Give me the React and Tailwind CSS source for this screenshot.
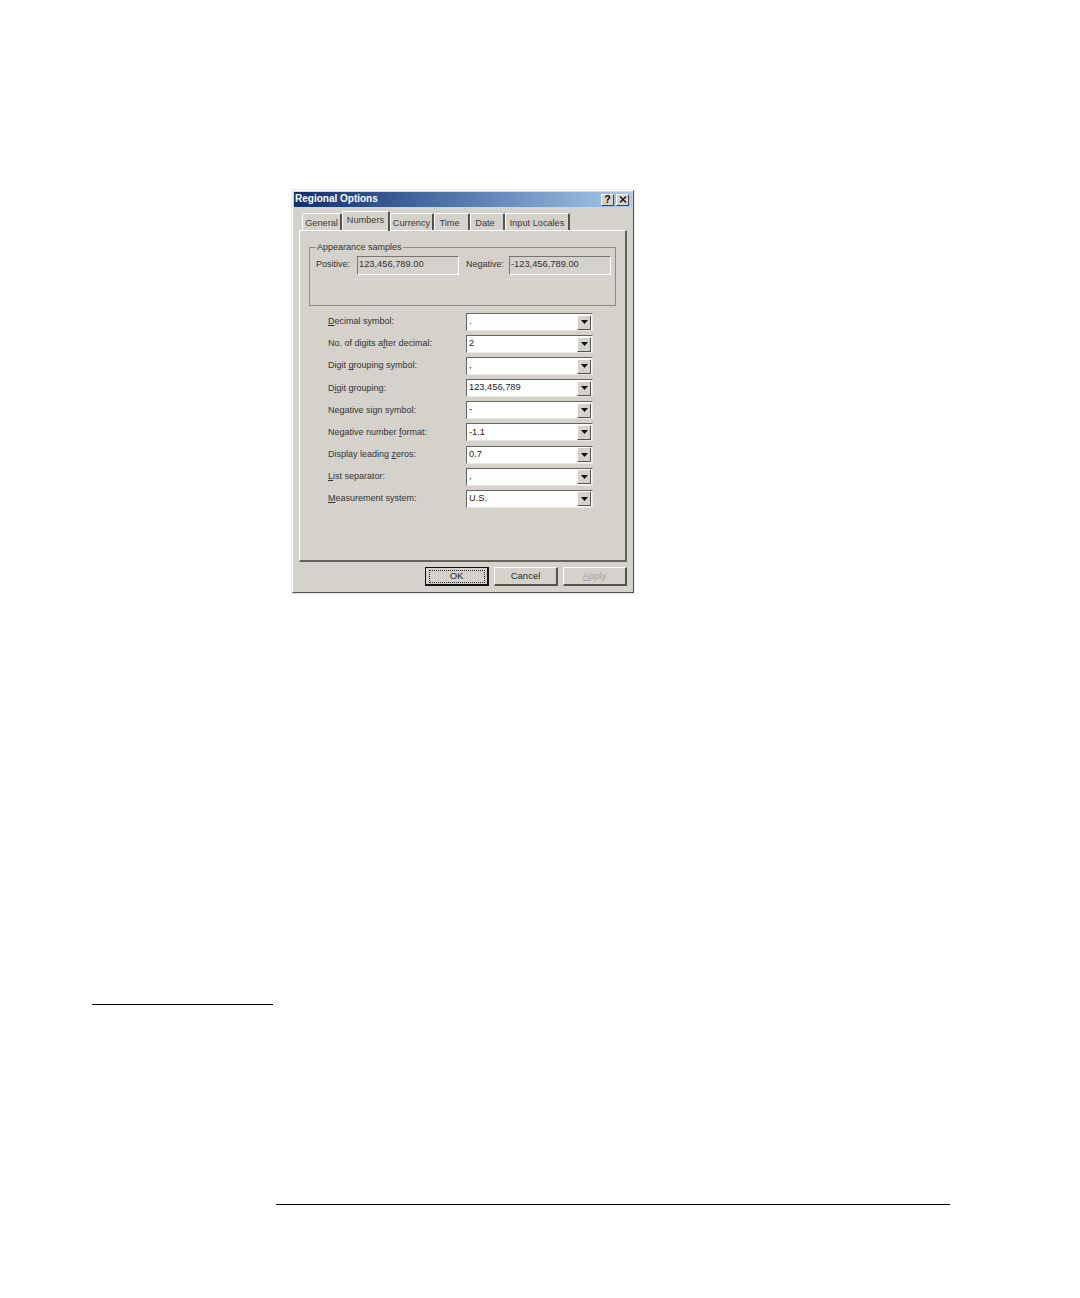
// Regional Options dialog on a scanned manual page
const FONT = { fontFamily: '"Liberation Sans", Arial, sans-serif' };

const ROWS = [
  { label: <><u>D</u>ecimal symbol:</>, value: '.' },
  { label: <>No. of digits a<u>f</u>ter decimal:</>, value: '2' },
  { label: <>Digit <u>g</u>rouping symbol:</>, value: ',' },
  { label: <>D<u>i</u>git grouping:</>, value: '123,456,789' },
  { label: <>Ne<u>g</u>ative sign symbol:</>, value: '-' },
  { label: <>Negative number <u>f</u>ormat:</>, value: '-1.1' },
  { label: <>Display leading <u>z</u>eros:</>, value: '0.7' },
  { label: <><u>L</u>ist separator:</>, value: ',' },
  { label: <><u>M</u>easurement system:</>, value: 'U.S.' },
];

const TABS = [
  { name: 'General', w: 'w-[40px]' },
  { name: 'Numbers', w: 'w-[48px]', active: true },
  { name: 'Currency', w: 'w-[44px]' },
  { name: 'Time', w: 'w-[36px] pr-[4px]' },
  { name: 'Date', w: 'w-[35px] pr-[4px]' },
  { name: 'Input Locales', w: 'w-[65px]' },
];

function Tab({ name, w, active }) {
  return (
    <div
      className={`${w} flex items-center justify-center border-l border-t border-white border-r-2 border-r-[#55534e] text-[9.2px] text-[#3a3a3a] whitespace-nowrap rounded-t-[2px] ${
        active ? 'h-[20px] relative z-10 -mb-px pb-[1px]' : 'h-[17px] pt-[3px]'
      }`}
    >
      {name}
    </div>
  );
}

function Sample({ value, w }) {
  return (
    <div className={`${w} h-[19px] border border-t-[#77756f] border-l-[#77756f] border-r-white border-b-white flex items-center pl-[1px] pb-[1px] text-[9.3px] text-[#333]`}>
      {value}
    </div>
  );
}

function Combo({ value }) {
  return (
    <div className="w-[127px] h-[18px] bg-white border border-t-[#66645f] border-l-[#66645f] border-r-[#e8e6e0] border-b-[#e8e6e0] flex items-center justify-between">
      <span className="pl-[2px] text-[9.3px] text-[#222]">{value}</span>
      <div className="w-[14px] h-[15px] mr-px bg-[#d5d2cb] border border-t-white border-l-white border-r-[#55534e] border-b-[#55534e] flex items-center justify-center">
        <svg width="7" height="4" viewBox="0 0 7 4"><path d="M0 0h7L3.5 4z" fill="#111" /></svg>
      </div>
    </div>
  );
}

function Btn({ children, w, ok, disabled }) {
  return (
    <div
      className={`${w} h-[19px] flex items-center justify-center border text-[9.5px] ${
        ok
          ? 'border-[#111] border-b-2 border-r-2'
          : 'border-t-white border-l-white border-r-[#55534e] border-b-[#55534e] border-r-2 border-b-2'
      } ${disabled ? 'text-[#a5a39d]' : 'text-[#2a2a2a]'}`}
    >
      {ok ? (
        <div className="w-[56px] h-[13px] border border-dotted border-[#222] flex items-center justify-center">{children}</div>
      ) : (
        children
      )}
    </div>
  );
}

export default function App() {
  return (
    <div className="w-[1080px] h-[1298px] bg-white overflow-hidden flex flex-col" style={FONT}>
      <div className="ml-[291px] mt-[189px] w-[344px] h-[405px] border border-[#e6e6e6] shrink-0">
        <div className="h-full bg-[#d5d2cb] border-t border-l border-white border-r border-r-[#55534e] border-b border-b-[#55534e] p-px flex flex-col">
          {/* Title bar */}
          <div className="h-[15px] bg-gradient-to-r from-[#0f2f70] to-[#a8caec] flex items-center justify-between pl-[1px] pr-[3px]">
            <span className="text-[10px] font-bold text-white leading-none pb-[2px]">Regional Options</span>
            <div className="flex gap-[2px]">
              <div className="w-[13px] h-[12px] bg-[#d5d2cb] border border-t-white border-l-white border-r-[#444] border-b-[#444] flex items-center justify-center text-[10px] font-bold text-black leading-none">?</div>
              <div className="w-[13px] h-[12px] bg-[#d5d2cb] border border-t-white border-l-white border-r-[#444] border-b-[#444] flex items-center justify-center">
                <svg width="8" height="7" viewBox="0 0 8 7"><path d="M1 0.5l6 6M7 0.5l-6 6" stroke="#111" strokeWidth="1.4" /></svg>
              </div>
            </div>
          </div>

          {/* Tabs */}
          <div className="h-[21px] mt-[2px] flex items-end pl-[8px]">
            {TABS.map((t) => <Tab key={t.name} {...t} />)}
          </div>

          {/* Panel */}
          <div className="mx-[5px] h-[332px] border-t border-l border-white border-r-2 border-b-2 border-r-[#66645f] border-b-[#66645f] pt-[16px] px-[9px]">
            <div className="relative h-[59px] border border-[#8c8a84] flex items-start pt-[8px] pl-[6px]">
              <span className="absolute -top-[7px] left-[6px] bg-[#d5d2cb] px-px text-[9px] leading-[12px] text-[#333]">Appearance samples</span>
              <span className="text-[9px] text-[#333] mt-[2px] w-[41px]">Positive:</span>
              <Sample value="123,456,789.00" w="w-[102px]" />
              <span className="text-[9px] text-[#333] mt-[2px] ml-[7px] w-[43px]">Negative:</span>
              <Sample value="-123,456,789.00" w="w-[102px]" />
            </div>
            <div className="mt-[7px] ml-[19px] flex flex-col gap-[4.1px]">
              {ROWS.map((r, i) => (
                <div key={i} className="h-[18px] flex items-center">
                  <span className="w-[138px] text-[9px] text-[#333]">{r.label}</span>
                  <Combo value={r.value} />
                </div>
              ))}
            </div>
          </div>

          {/* Buttons */}
          <div className="mt-[5px] mr-[5px] flex justify-end gap-[5px]">
            <Btn w="w-[64px]" ok>OK</Btn>
            <Btn w="w-[64px]">Cancel</Btn>
            <Btn w="w-[64px]" disabled><span><u>A</u>pply</span></Btn>
          </div>
        </div>
      </div>

      {/* Footnote and footer rules */}
      <div className="ml-[92px] mt-[410px] w-[181px] h-px bg-black shrink-0" />
      <div className="ml-[276px] mt-[199px] w-[674px] h-px bg-black shrink-0" />
    </div>
  );
}
